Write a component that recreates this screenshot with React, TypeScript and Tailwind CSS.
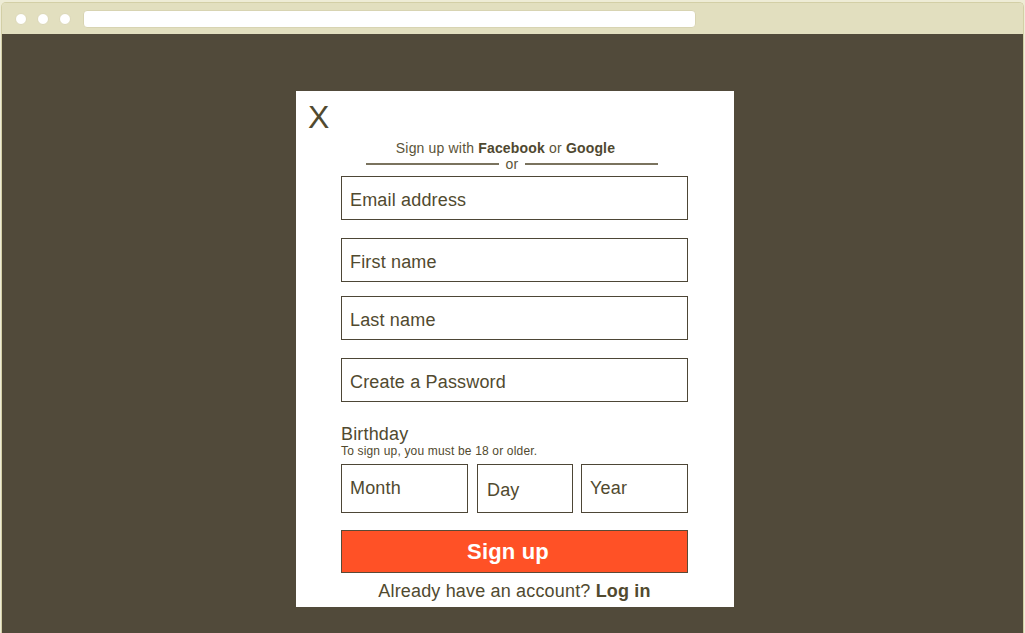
export default function App() {
  return (
    <div
      className="min-h-screen bg-[#eeecd6] pt-[2px] px-[1px] text-[#514a2f] tracking-[0.17px]"
      style={{ fontFamily: '"Liberation Sans", Arial, sans-serif' }}
    >
      <div className="rounded-t-[5px] border border-b-0 border-[#d3cfa6] overflow-hidden">
        {/* ── Browser chrome ── */}
        <div className="h-[31px] bg-[#e2dfbf] flex items-center pl-[13px]">
          <div className="flex items-center gap-[10px]">
            <span className="w-[12px] h-[12px] rounded-full bg-white border border-[#dcd8b8]" />
            <span className="w-[12px] h-[12px] rounded-full bg-white border border-[#dcd8b8]" />
            <span className="w-[12px] h-[12px] rounded-full bg-white border border-[#dcd8b8]" />
          </div>
          <div className="ml-[12px] w-[613px] h-[18px] rounded-[4px] bg-white border border-[#d8d4b2]" />
        </div>

        {/* ── Page ── */}
        <div className="bg-[#514a3a] h-[599px] pt-[57px] pl-[294px]">
          <div className="w-[438px] h-[516px] bg-white">
            <div className="pl-[12px] pt-[10px] text-[32px] leading-8 tracking-normal">X</div>

            <p className="mt-[7px] pr-[19px] text-center text-[14px] leading-4 text-[#5b5438]">
              Sign up with <span className="font-bold text-[#4f4830]">Facebook</span> or{' '}
              <span className="font-bold text-[#4f4830]">Google</span>
            </p>

            <div className="ml-[70px] w-[292px] h-4 flex items-center">
              <div className="flex-1 h-[2px] bg-[#7a735e]" />
              <span className="px-[7px] text-[14px] leading-4 text-[#5b5438]">or</span>
              <div className="flex-1 h-[2px] bg-[#7a735e]" />
            </div>

            <div className="ml-[45px] w-[347px]">
              <div className="mt-[4px] h-[44px] border border-[#4d4636] flex items-center pl-[8px] pt-[4px] text-[18px] leading-5">
                Email address
              </div>
              <div className="mt-[18px] h-[44px] border border-[#4d4636] flex items-center pl-[8px] pt-[4px] text-[18px] leading-5">
                First name
              </div>
              <div className="mt-[14px] h-[44px] border border-[#4d4636] flex items-center pl-[8px] pt-[3px] text-[18px] leading-5">
                Last name
              </div>
              <div className="mt-[18px] h-[44px] border border-[#4d4636] flex items-center pl-[8px] pt-[3px] text-[18px] leading-5">
                Create a Password
              </div>

              <div className="mt-[22px] text-[18px] leading-5">Birthday</div>
              <div className="text-[12px] leading-[14px]">To sign up, you must be 18 or older.</div>

              <div className="mt-[6px] flex">
                <div className="w-[127px] h-[49px] border border-[#4d4636] flex items-center pl-[8px] pb-[1px] text-[18px] leading-5">
                  Month
                </div>
                <div className="ml-[9px] w-[96px] h-[49px] border border-[#4d4636] flex items-center pl-[9px] pt-[2px] text-[18px] leading-5">
                  Day
                </div>
                <div className="ml-[8px] w-[107px] h-[49px] border border-[#4d4636] flex items-center pl-[8px] pb-[1px] text-[18px] leading-5">
                  Year
                </div>
              </div>

              <button className="mt-[17px] w-full h-[43px] bg-[#ff5126] border border-[#5a4a36] text-white font-bold text-[22px] leading-[26px] pr-[13px]">
                Sign up
              </button>

              <p className="mt-[8px] text-center text-[18px] leading-5">
                Already have an account? <span className="font-bold">Log in</span>
              </p>
            </div>
          </div>
        </div>
      </div>
    </div>
  )
}
